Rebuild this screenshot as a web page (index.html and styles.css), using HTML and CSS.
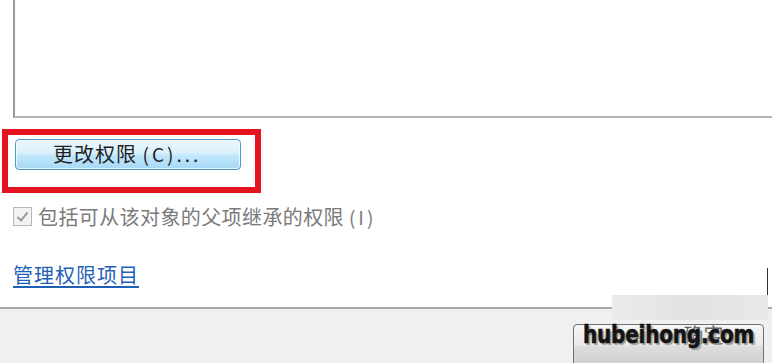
FILE: index.html
```html
<!DOCTYPE html>
<html lang="zh-CN">
<head>
    <meta charset="UTF-8">
    <title>权限</title>
    <link rel="stylesheet" href="styles.css">
</head>
<body>
    <div class="dialog">
        <div class="main">
            <div class="perm-list"></div>
            <div class="highlight">
                <button class="btn-change">更改权限&nbsp;<span class="key">(C)...</span></button>
            </div>
            <label class="inherit">
                <span class="checkbox">
                    <svg width="13" height="11" viewBox="0 0 13 11"><path d="M1.5 6 L5 9.5 L11.5 1.5" fill="none" stroke="#9a9a9a" stroke-width="2"/></svg>
                </span>
                <span class="inherit-text">包括可从该对象的父项继承的权限 <span class="key">(I)</span></span>
            </label>
            <a class="manage-link" href="#">管理权限项目</a>
        </div>
        <div class="footer">
            <button class="btn-ok">确定</button>
        </div>
    </div>

    <!-- 水印 -->
    <div class="wm-blur"></div>
    <div class="wm-edge"></div>
    <div class="watermark">hubeihong.com</div>
</body>
</html>
```

FILE: styles.css
```css
body {
    margin: 0;
    background-color: #ffffff;
    font-family: "Noto Sans CJK SC", "Liberation Sans", sans-serif;
    overflow: hidden;
    height: 363px;
    position: relative;
}
.dialog {
    display: flex;
    flex-direction: column;
    height: 363px;
}
.main {
    flex-grow: 1;
    display: flex;
    flex-direction: column;
    align-items: flex-start;
}
.perm-list {
    align-self: stretch;
    margin-left: 13px;
    height: 116px;
    border-left: 2px solid #9a9a9a;
    border-bottom: 2px solid #b2b2b2;
}
.highlight {
    margin: 11px 0 0 2px;
    width: 240px;
    height: 48px;
    padding: 4px 0 0 7px;
    border: 6px solid #e3141f;
}
.btn-change {
    display: block;
    width: 226px;
    height: 31px;
    padding: 0 0 2px 37px;
    border: 1px solid #4d97cc;
    border-radius: 4px;
    background: linear-gradient(#eaf6fd, #d9f0fc 45%, #bee6fd 55%, #a7d9f5);
    box-shadow: inset 0 0 0 1px rgba(255, 255, 255, 0.7);
    color: #222222;
    font-family: "Noto Sans CJK SC", sans-serif;
    font-size: 20px;
    line-height: 1;
    letter-spacing: 1px;
    text-align: left;
    white-space: nowrap;
}
.key {
    letter-spacing: 3px;
    font-size: 19px;
}
.inherit {
    display: flex;
    align-items: center;
    margin: 9px 0 0 13px;
    color: #7a7a7a;
    font-size: 20px;
}
.checkbox {
    display: flex;
    align-items: center;
    justify-content: center;
    width: 17px;
    height: 17px;
    margin-right: 6px;
    border: 1px solid #b8b8b8;
    background: #f2f2f2;
}
.inherit-text {
    letter-spacing: 0.4px;
}
.manage-link {
    margin: 29px 0 0 13px;
    color: #1f5fb8;
    font-size: 20px;
    letter-spacing: 1px;
    text-decoration: underline;
    text-underline-offset: 3px;
}
.footer {
    height: 54px;
    border-top: 2px solid #a8a8a8;
    background-color: #f0f0f0;
    display: flex;
    justify-content: flex-end;
    align-items: flex-start;
    padding-right: 8px;
}
.btn-ok {
    margin-top: 15px;
    width: 191px;
    height: 44px;
    border: 1px solid #707070;
    border-radius: 4px;
    background: linear-gradient(#f6f6f6, #e8e8e8 50%, #dddddd 51%, #cfcfcf);
    color: #666666;
    font-family: "Noto Sans CJK SC", sans-serif;
    font-size: 20px;
    line-height: 1;
    padding: 0 0 22px 70px;
    text-align: center;
}
.wm-blur {
    position: absolute;
    left: 612px;
    top: 295px;
    width: 156px;
    height: 25px;
    background: linear-gradient(90deg, #ebebeb, #e2e2e2 50%, #e8e8e8);
}
.wm-edge {
    position: absolute;
    left: 767px;
    top: 268px;
    width: 1px;
    height: 27px;
    background: #333333;
}
.watermark {
    position: absolute;
    left: 583px;
    top: 322px;
    color: #141414;
    font-family: "DejaVu Sans", sans-serif;
    font-weight: bold;
    font-size: 20px;
    letter-spacing: -0.2px;
    transform: scaleY(1.25);
    -webkit-text-stroke: 0.5px #141414;
    text-shadow: 2px 2px 1px #9a9a9a;
}
```
